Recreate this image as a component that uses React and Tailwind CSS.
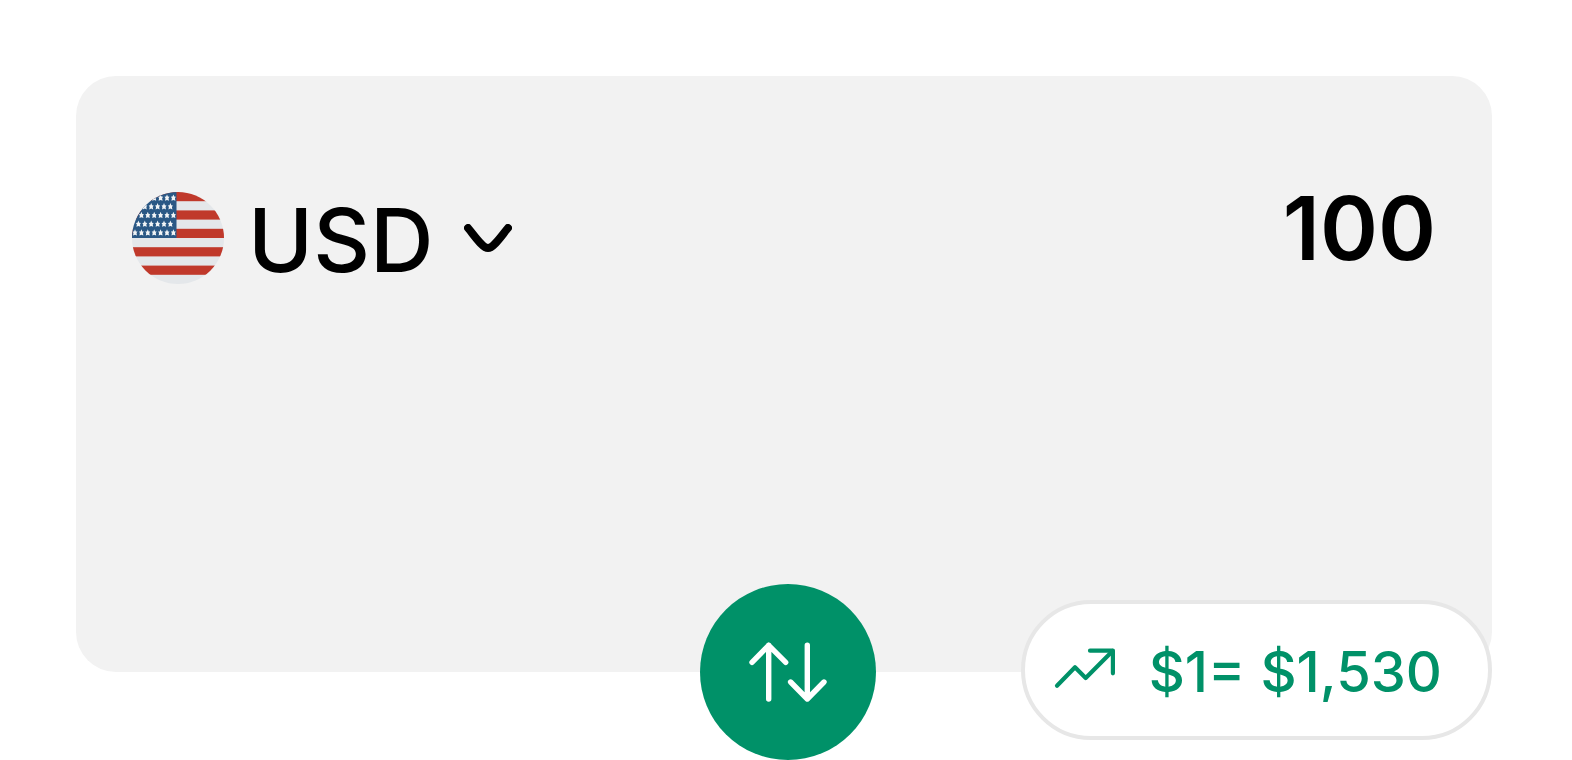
import React from "react";

const CURRENCIES = ["USD", "EUR", "GBP"];

// Red stripes on a 92px flag, every other 9.2px band
const RED_STRIPES = [0, 18.4, 36.8, 55.2, 73.6];

// Long rows and short rows of stars alternate in the canton
const LONG_ROW = [3, 9.4, 15.8, 22.2, 28.6, 35, 41.4];
const SHORT_ROW = [6.4, 12.8, 19.2, 25.6, 32, 38.4];
const STAR_ROWS = [
  { y: 5.7, xs: LONG_ROW },
  { y: 14.4, xs: SHORT_ROW },
  { y: 23.1, xs: LONG_ROW },
  { y: 31.8, xs: SHORT_ROW },
  { y: 40.5, xs: LONG_ROW },
];

function UsFlag() {
  return (
    <svg
      viewBox="0 0 92 92"
      className="size-[92px] shrink-0 rounded-full"
      aria-hidden="true"
    >
      <rect width="92" height="92" fill="#e4e7ea" />
      {RED_STRIPES.map((y) => (
        <rect key={y} y={y} width="92" height="9.2" fill="#c0392b" />
      ))}
      <rect width="44.5" height="46" fill="#2a5885" />
      {STAR_ROWS.map((row) =>
        row.xs.map((x) => (
          <path
            key={`${row.y}-${x}`}
            transform={`translate(${x} ${row.y})`}
            d="M0 -3.3 L0.9 -1.1 L2.5 -0.9 L1.5 0.6 L2 3 L0 2.2 L-2 3 L-1.5 0.6 L-2.5 -0.9 L-0.9 -1.1 Z"
            fill="#f1f4f6"
          />
        ))
      )}
    </svg>
  );
}

function ChevronIcon() {
  return (
    <svg
      viewBox="0 0 48 28"
      className="pointer-events-none h-7 w-12 shrink-0"
      fill="none"
      stroke="currentColor"
      strokeWidth="8"
      strokeLinecap="round"
      aria-hidden="true"
    >
      <path d="M4 4 C10 11 18.5 24 24 24 C29.5 24 38 11 44 4" />
    </svg>
  );
}

function SwapIcon() {
  return (
    <svg
      viewBox="0 0 80 64"
      className="h-16 w-20"
      fill="none"
      stroke="currentColor"
      strokeWidth="5.4"
      strokeLinecap="round"
      strokeLinejoin="round"
      aria-hidden="true"
    >
      <path d="M20.7 59 V5.3 M4 22.3 L20.7 5.3 L37.7 22.3" />
      <path d="M59.3 5.3 V59 M42.6 42 L59.3 59 L76 42" />
    </svg>
  );
}

function TrendIcon() {
  return (
    <svg
      viewBox="0 0 64 48"
      className="h-12 w-16 shrink-0"
      fill="none"
      stroke="currentColor"
      strokeWidth="4.2"
      strokeLinecap="round"
      strokeLinejoin="round"
      aria-hidden="true"
    >
      <path d="M4 39.7 L22 21.3 L32.7 32 L59.6 5" />
      <path d="M37 4.7 H59.9 V27.3" />
    </svg>
  );
}

function App() {
  const [currency, setCurrency] = React.useState("USD");
  const [amount, setAmount] = React.useState("100");

  return (
    <main className="bg-white pt-[76px] pr-20 pl-[76px] font-['Inter',sans-serif] text-black">
      {/* ---------- Amount card ---------- */}
      <section className="flex min-h-[596px] items-start justify-between rounded-[40px] bg-[#f2f2f2] px-14 pt-[108px]">
        <div className="flex items-center pt-2">
          <UsFlag />
          <select
            aria-label="Currency"
            value={currency}
            onChange={(e) => setCurrency(e.target.value)}
            className="mr-[30px] ml-6 appearance-none bg-transparent pt-1 text-[88px] leading-[88px] font-medium outline-none [field-sizing:content]"
          >
            {CURRENCIES.map((c) => (
              <option key={c}>{c}</option>
            ))}
          </select>
          <ChevronIcon />
        </div>

        <input
          type="text"
          inputMode="decimal"
          aria-label="Amount"
          value={amount}
          onChange={(e) => setAmount(e.target.value)}
          className="h-[88px] w-full min-w-0 flex-1 bg-transparent text-right text-[88px] leading-[88px] font-semibold outline-none"
        />
      </section>

      {/* ---------- Swap button and rate ---------- */}
      <div className="-mt-[88px] grid grid-cols-[1fr_auto_1fr] items-start pl-2">
        <button
          type="button"
          aria-label="Swap currencies"
          className="col-start-2 flex size-[176px] items-center justify-center rounded-full bg-[#009168] text-white"
        >
          <SwapIcon />
        </button>
        <div className="mt-4 flex h-[140px] items-center gap-8 justify-self-end rounded-full border-4 border-[#e7e7e7] bg-white pr-[46px] pl-7 text-[#009168]">
          <TrendIcon />
          <p className="pt-1 text-[56px] leading-[56px] font-medium whitespace-nowrap">
            $1= $1,530
          </p>
        </div>
      </div>
    </main>
  );
}

export default App;
